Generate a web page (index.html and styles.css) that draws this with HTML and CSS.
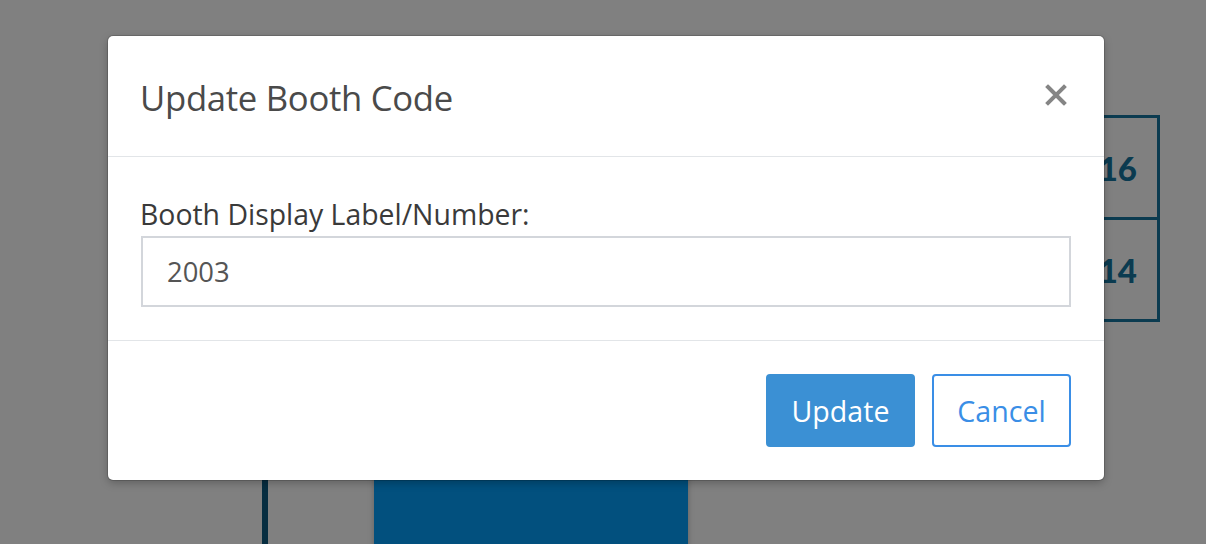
FILE: index.html
```html
<!DOCTYPE html>
<html>
<head>
<meta charset="utf-8">
<link rel="stylesheet" href="styles.css">
</head>
<body>
<div class="canvas">
  <div class="booth-group">
    <div class="booth-cell"><span>16</span></div>
    <div class="booth-cell"><span>14</span></div>
  </div>
  <div class="wall-line"></div>
  <div class="booth-block"></div>
</div>
<div class="overlay">
  <div class="modal">
    <div class="modal-header">
      <h4 class="modal-title">Update Booth Code</h4>
      <button class="close" type="button" aria-label="Close">
        <svg width="22" height="22" viewBox="0 0 22 22"><path d="M3 3 L19 19 M19 3 L3 19" stroke="#858585" stroke-width="4" stroke-linecap="square" fill="none"/></svg>
      </button>
    </div>
    <div class="modal-body">
      <label class="field-label">Booth Display Label/Number:</label>
      <div class="input">2003</div>
    </div>
    <div class="modal-footer">
      <button class="btn btn-primary" type="button">Update</button>
      <button class="btn btn-outline" type="button">Cancel</button>
    </div>
  </div>
</div>
</body>
</html>
```

FILE: styles.css
```css
html, body {
  margin: 0;
  padding: 0;
  width: 1206px;
  height: 544px;
  overflow: hidden;
  background: #808080;
  font-family: "Open Sans", "Noto Sans", sans-serif;
}

.canvas {
  position: absolute;
  inset: 0;
  background: #808080;
}

.booth-group {
  position: absolute;
  left: 1040px;
  top: 115px;
  width: 120px;
  height: 207px;
  border: 3px solid #0b3b50;
  box-sizing: border-box;
  display: flex;
  flex-direction: column;
}

.booth-cell {
  flex: 1;
  display: flex;
  align-items: center;
  justify-content: flex-end;
  padding-right: 20px;
  font-family: "Lato", sans-serif;
  font-weight: 900;
  font-size: 33px;
  color: #0b3b50;
}

.booth-cell + .booth-cell {
  border-top: 3px solid #0b3b50;
}

.wall-line {
  position: absolute;
  left: 262px;
  top: 470px;
  width: 6px;
  height: 80px;
  background: #062d40;
}

.booth-block {
  position: absolute;
  left: 374px;
  top: 470px;
  width: 314px;
  height: 80px;
  background: #02507e;
  box-shadow: 0 0 6px rgba(0, 0, 0, 0.25);
}

.overlay {
  position: absolute;
  inset: 0;
  padding: 36px 0 0 108px;
}

.modal {
  width: 996px;
  height: 444px;
  box-sizing: border-box;
  background: #fff;
  border-radius: 5px;
  box-shadow: 0 0 0 1px rgba(0, 0, 0, 0.15), 0 3px 8px rgba(0, 0, 0, 0.25);
  display: flex;
  flex-direction: column;
}

.modal-header {
  height: 121px;
  box-sizing: border-box;
  border-bottom: 1px solid #e2e5e8;
  display: flex;
  align-items: center;
  justify-content: space-between;
  padding: 0 37px 0 32px;
}

.modal-title {
  margin: 0;
  font-size: 34.7px;
  font-weight: 400;
  color: #4a4a4a;
  letter-spacing: -0.3px;
  padding-top: 2px;
}

.close {
  border: 0;
  background: none;
  padding: 0;
  margin-top: -2px;
  width: 22px;
  height: 22px;
  display: flex;
}

.modal-body {
  height: 184px;
  box-sizing: border-box;
  border-bottom: 1px solid #e2e5e8;
  padding: 40px 33px 0 33px;
}

.field-label {
  display: block;
  font-size: 28.4px;
  line-height: 35px;
  color: #3a3a3a;
  margin-bottom: 4px;
  margin-left: -1px;
}

.input {
  height: 71px;
  box-sizing: border-box;
  border: 2px solid #d3d6db;
  padding: 0 24px;
  display: flex;
  align-items: center;
  font-size: 27.4px;
  color: #555;
}

.modal-footer {
  flex: 1;
  display: flex;
  justify-content: flex-end;
  align-items: flex-start;
  gap: 17px;
  padding: 33px 33px 0 0;
}

.btn {
  height: 73px;
  box-sizing: border-box;
  border-radius: 4px;
  font-family: "Open Sans", "Noto Sans", sans-serif;
  font-size: 28.6px;
  padding: 0;
  display: flex;
  align-items: center;
}

.btn-primary {
  width: 149px;
  justify-content: center;
  background: #3b90d4;
  border: 2px solid #3b90d4;
  color: #fff;
}

.btn-outline {
  width: 139px;
  justify-content: center;
  background: #fff;
  border: 2px solid #3a8ee6;
  color: #3a8ee6;
}
```
